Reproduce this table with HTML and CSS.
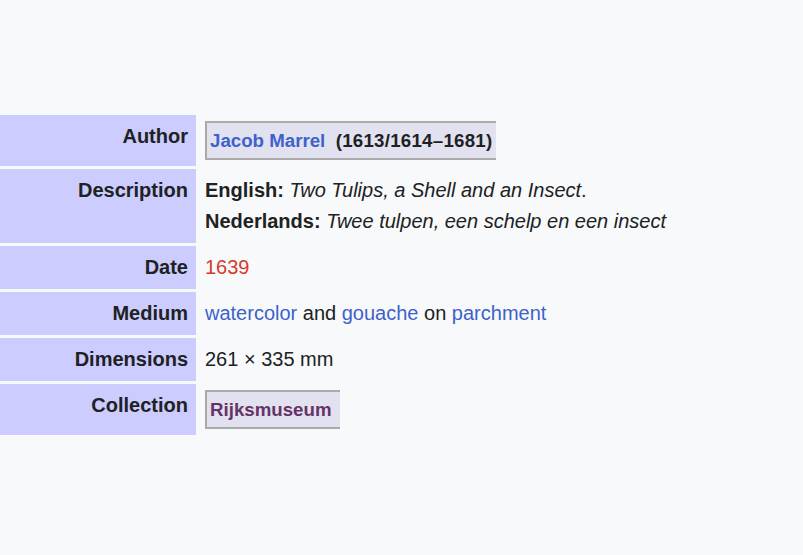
FILE: index.html
```html
<!DOCTYPE html>
<html lang="en">
<head>
<meta charset="utf-8">
<title>Two Tulips, a Shell and an Insect</title>
<link rel="stylesheet" href="styles.css">
</head>
<body>
<main class="page">
  <div class="info">
    <div class="label">Author</div>
    <div class="value"><span class="box box-author"><a class="link" href="#">Jacob Marrel</a>&nbsp; <span class="years">(1613/1614–1681)</span></span></div>

    <div class="label">Description</div>
    <div class="value">
      <div><b>English:</b> <i>Two Tulips, a Shell and an Insect</i>.</div>
      <div><b>Nederlands:</b> <i>Twee tulpen, een schelp en een insect</i></div>
    </div>

    <div class="label">Date</div>
    <div class="value"><span class="date">1639</span></div>

    <div class="label">Medium</div>
    <div class="value"><a class="link" href="#">watercolor</a> and <a class="link" href="#">gouache</a> on <a class="link" href="#">parchment</a></div>

    <div class="label">Dimensions</div>
    <div class="value">261 × 335 mm</div>

    <div class="label">Collection</div>
    <div class="value"><span class="box box-collection"><a class="visited" href="#">Rijksmuseum</a></span></div>
  </div>
</main>
</body>
</html>
```

FILE: styles.css
```css
html, body {
  margin: 0;
  padding: 0;
  background: #f8f9fa;
}

body {
  font-family: "Liberation Sans", Arial, sans-serif;
  font-size: 20px;
  line-height: 31px;
  color: #202122;
}

.page {
  padding-top: 115px;
}

.info {
  display: grid;
  grid-template-columns: 196px 1fr;
  row-gap: 3px;
  column-gap: 3px;
}

.label {
  background: #ccccff;
  font-weight: bold;
  text-align: right;
  padding: 6px 8px 6px 6px;
}

.value {
  padding: 6px 6px;
}

.box {
  display: inline-block;
  background: #e1e1f0;
  border: 2px solid #aaaaaa;
  border-right: none;
  font-size: 18.7px;
  font-weight: bold;
  line-height: 31px;
  padding: 2px 4px 2px 3px;
}

.years {
  letter-spacing: 0.25px;
}

.box-collection {
  padding-right: 8px;
}

.link {
  color: #3d62cc;
  text-decoration: none;
}

.visited {
  color: #663366;
  text-decoration: none;
}

.date {
  color: #d63a2c;
}
```
